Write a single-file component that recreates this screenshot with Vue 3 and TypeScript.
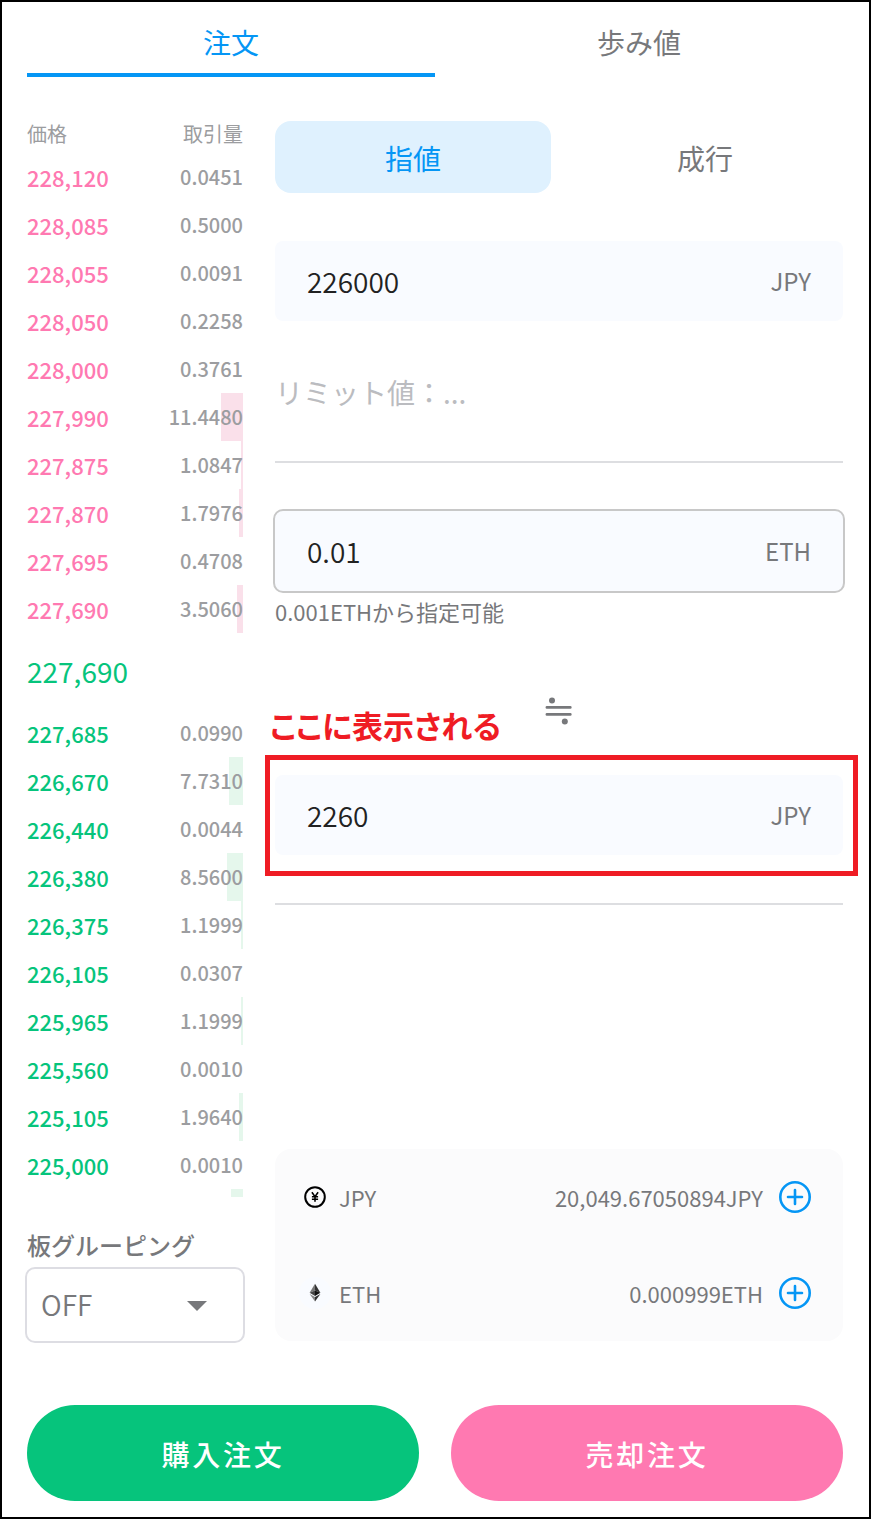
<script setup lang="ts">
import { ref } from 'vue'

interface Level {
  price: string
  amount: string
  depth: number
}

const asks: Level[] = [
  { price: '228,120', amount: '0.0451', depth: 0 },
  { price: '228,085', amount: '0.5000', depth: 0 },
  { price: '228,055', amount: '0.0091', depth: 0 },
  { price: '228,050', amount: '0.2258', depth: 0 },
  { price: '228,000', amount: '0.3761', depth: 0 },
  { price: '227,990', amount: '11.4480', depth: 22 },
  { price: '227,875', amount: '1.0847', depth: 2 },
  { price: '227,870', amount: '1.7976', depth: 4 },
  { price: '227,695', amount: '0.4708', depth: 0 },
  { price: '227,690', amount: '3.5060', depth: 6 },
]

const bids: Level[] = [
  { price: '227,685', amount: '0.0990', depth: 0 },
  { price: '226,670', amount: '7.7310', depth: 14 },
  { price: '226,440', amount: '0.0044', depth: 0 },
  { price: '226,380', amount: '8.5600', depth: 16 },
  { price: '226,375', amount: '1.1999', depth: 2 },
  { price: '226,105', amount: '0.0307', depth: 0 },
  { price: '225,965', amount: '1.1999', depth: 2 },
  { price: '225,560', amount: '0.0010', depth: 0 },
  { price: '225,105', amount: '1.9640', depth: 4 },
  { price: '225,000', amount: '0.0010', depth: 0 },
]

const tab = ref<'order' | 'trades'>('order')
const kind = ref<'limit' | 'market'>('limit')
</script>

<template>
  <div class="screen">
    <nav class="tabs">
      <button class="tab" :class="{ active: tab === 'order' }" @click="tab = 'order'">注文</button>
      <button class="tab" :class="{ active: tab === 'trades' }" @click="tab = 'trades'">歩み値</button>
    </nav>

    <main class="columns">
      <section class="book">
        <div class="book-head"><span>価格</span><span>取引量</span></div>
        <div v-for="row in asks" :key="row.price" class="level ask">
          <span class="price">{{ row.price }}</span>
          <span class="amount">{{ row.amount }}</span>
          <i class="depth" :style="{ width: row.depth + 'px' }"></i>
        </div>
        <div class="last">227,690</div>
        <div v-for="row in bids" :key="row.price" class="level bid">
          <span class="price">{{ row.price }}</span>
          <span class="amount">{{ row.amount }}</span>
          <i class="depth" :style="{ width: row.depth + 'px' }"></i>
        </div>
        <div class="clipped"></div>
        <div class="group-label">板グルーピング</div>
        <div class="select">
          <span class="choice">OFF</span>
          <svg width="20" height="10" viewBox="0 0 20 10"><path d="M0 0H20L10 10Z" fill="#77787b" /></svg>
        </div>
      </section>

      <section class="form">
        <div class="segment">
          <button class="seg" :class="{ active: kind === 'limit' }" @click="kind = 'limit'">指値</button>
          <button class="seg" :class="{ active: kind === 'market' }" @click="kind = 'market'">成行</button>
        </div>
        <div class="field"><span class="value">226000</span><span class="unit">JPY</span></div>
        <div class="limit">リミット値：...</div>
        <div class="field outlined"><span class="value">0.01</span><span class="unit">ETH</span></div>
        <div class="helper">0.001ETHから指定可能</div>
        <div class="approx">
          <svg width="28" height="28" viewBox="0 0 28 28">
            <g fill="#77787b">
              <circle cx="7" cy="3.5" r="3" />
              <rect x="0.6" y="9" width="26" height="2.8" rx="1.2" />
              <rect x="0.6" y="16" width="26" height="2.8" rx="1.2" />
              <circle cx="19.8" cy="24.5" r="3" />
            </g>
          </svg>
        </div>
        <div class="total">
          <div class="field"><span class="value">2260</span><span class="unit">JPY</span></div>
          <div class="mark"></div>
          <div class="note">ここに表示される</div>
        </div>
        <div class="rule"></div>

        <div class="wallet">
          <div class="asset">
            <svg class="coin" width="32" height="32" viewBox="0 0 32 32" fill="none" stroke="#000">
              <circle cx="16" cy="16" r="9.8" stroke-width="2" />
              <path d="M12.9 11.2L16 15.6L19.1 11.2M16 15.6V20.8M12.9 15.8H19.1M12.9 18.2H19.1" stroke-width="1.6" />
            </svg>
            <span class="code">JPY</span>
            <span class="balance">20,049.67050894JPY</span>
            <svg class="plus" width="32" height="32" viewBox="0 0 32 32" fill="none" stroke="#0596f5">
              <circle cx="16" cy="16" r="14.7" stroke-width="2.6" />
              <path d="M16 9V23M9 16H23" stroke-width="2.6" stroke-linecap="round" />
            </svg>
          </div>
          <div class="asset">
            <svg class="coin" width="32" height="32" viewBox="0 0 32 32">
              <circle cx="16" cy="16" r="16" fill="#f9fbff" />
              <path d="M16 6.7L10.6 15.8L16 13.4Z" fill="#777" />
              <path d="M16 6.7L21.4 15.8L16 13.4Z" fill="#333" />
              <path d="M10.6 15.8L16 13.4V18.9Z" fill="#444" />
              <path d="M21.4 15.8L16 13.4V18.9Z" fill="#111" />
              <path d="M10.6 17L16 20.1V24.4Z" fill="#888" />
              <path d="M21.4 17L16 20.1V24.4Z" fill="#333" />
            </svg>
            <span class="code">ETH</span>
            <span class="balance">0.000999ETH</span>
            <svg class="plus" width="32" height="32" viewBox="0 0 32 32" fill="none" stroke="#0596f5">
              <circle cx="16" cy="16" r="14.7" stroke-width="2.6" />
              <path d="M16 9V23M9 16H23" stroke-width="2.6" stroke-linecap="round" />
            </svg>
          </div>
        </div>
      </section>
    </main>

    <footer class="actions">
      <button class="action buy">購入注文</button>
      <button class="action sell">売却注文</button>
    </footer>
  </div>
</template>

<style>
body {
  background: #fff;
}
</style>

<style scoped>
.screen,
.screen * {
  box-sizing: border-box;
}
.screen {
  width: 871px;
  height: 1519px;
  border: 2px solid #000;
  padding: 0 26px 0 25px;
  background: #fff;
  color: #77787b;
  font-family: 'Noto Sans CJK JP', sans-serif;
  overflow: hidden;
}
button {
  border: 0;
  padding: 0;
  margin: 0;
  background: none;
  color: inherit;
  font: inherit;
}
svg {
  display: block;
}
.tabs {
  display: flex;
  height: 75px;
}
.tab {
  flex: 1;
  font-size: 28px;
  line-height: 40px;
  padding: 20px 0 11px;
  border-bottom: 4px solid transparent;
}
.tab.active {
  color: #0596f5;
  border-bottom-color: #0596f5;
}
.columns {
  display: flex;
  gap: 32px;
  height: 1328px;
}
.book {
  width: 216px;
  padding-top: 36px;
}
.book-head {
  display: flex;
  justify-content: space-between;
  height: 40px;
  line-height: 42px;
  font-size: 20px;
  color: #9c9da0;
}
.level {
  position: relative;
  display: flex;
  justify-content: space-between;
  height: 48px;
  line-height: 48px;
  font-weight: 500;
}
.price {
  font-size: 22px;
}
.amount {
  font-size: 20px;
  color: #9c9da0;
  position: relative;
  z-index: 1;
}
.depth {
  position: absolute;
  top: 0;
  right: 0;
  height: 48px;
}
.ask .price {
  color: #ff79b1;
}
.bid .price {
  color: #06c47c;
}
.ask .depth {
  background: #fae0ea;
}
.bid .depth,
.clipped {
  background: #e5f7ec;
}
.last {
  height: 76px;
  line-height: 76px;
  font-size: 28px;
  color: #06c47c;
}
.clipped {
  width: 12px;
  height: 8px;
  margin-left: 204px;
}
.group-label {
  margin-top: 28px;
  height: 40px;
  line-height: 40px;
  font-size: 24px;
  font-weight: 500;
}
.select {
  display: flex;
  align-items: center;
  justify-content: space-between;
  margin: 2px -2px 0;
  height: 76px;
  padding: 1px 36px 0 14px;
  border: 2px solid #dddde3;
  border-radius: 10px;
  font-size: 28px;
  font-weight: 350;
}
.choice {
  padding-bottom: 4px;
}
.form {
  width: 568px;
  padding-top: 44px;
}
.segment {
  display: flex;
  gap: 16px;
}
.seg {
  flex: 1;
  height: 72px;
  padding-top: 1px;
  border-radius: 16px;
  font-size: 28px;
}
.seg.active {
  background: #dff1fe;
  color: #0596f5;
}
.field {
  display: flex;
  align-items: center;
  justify-content: space-between;
  height: 80px;
  padding: 0 32px;
  border-radius: 8px;
  background: #f9fbff;
}
.segment + .field {
  margin-top: 48px;
}
.value {
  font-size: 28px;
  font-weight: 350;
  color: #222;
}
.unit {
  font-size: 24px;
  padding-bottom: 2px;
}
.limit {
  height: 142px;
  padding-top: 51px;
  border-bottom: 2px solid #dddee1;
  font-size: 28px;
  line-height: 40px;
  color: #bbbcc0;
}
.outlined {
  margin: 46px -2px 0;
  height: 84px;
  border: 2px solid #c8c8c8;
  border-radius: 10px;
}
.helper {
  height: 40px;
  line-height: 36px;
  font-size: 22px;
}
.approx {
  display: flex;
  justify-content: center;
  padding-top: 64px;
}
.total {
  position: relative;
  margin-top: 50px;
}
.mark {
  position: absolute;
  left: -10px;
  top: -20px;
  width: 593px;
  height: 121px;
  border: 5px solid #ef1c24;
}
.note {
  position: absolute;
  left: -5px;
  top: -72px;
  font-size: 31px;
  line-height: 44px;
  font-weight: 700;
  font-feature-settings: 'palt';
  white-space: nowrap;
  color: #ef1c24;
}
.rule {
  height: 2px;
  margin-top: 48px;
  background: #dddee1;
}
.wallet {
  margin-top: 244px;
  height: 192px;
  border-radius: 16px;
  background: #fbfbfc;
}
.asset {
  display: flex;
  align-items: center;
  height: 96px;
  padding: 0 32px 0 24px;
  font-size: 22px;
}
.code {
  margin-left: 8px;
}
.balance {
  margin-left: auto;
  margin-right: 16px;
}
.actions {
  display: flex;
  gap: 32px;
}
.action {
  flex: 1;
  height: 96px;
  padding-top: 1px;
  border-radius: 48px;
  color: #fff;
  font-size: 28px;
  font-weight: 500;
  letter-spacing: 2.8px;
}
.buy {
  background: #06c47c;
}
.sell {
  background: #ff79b1;
}
</style>
